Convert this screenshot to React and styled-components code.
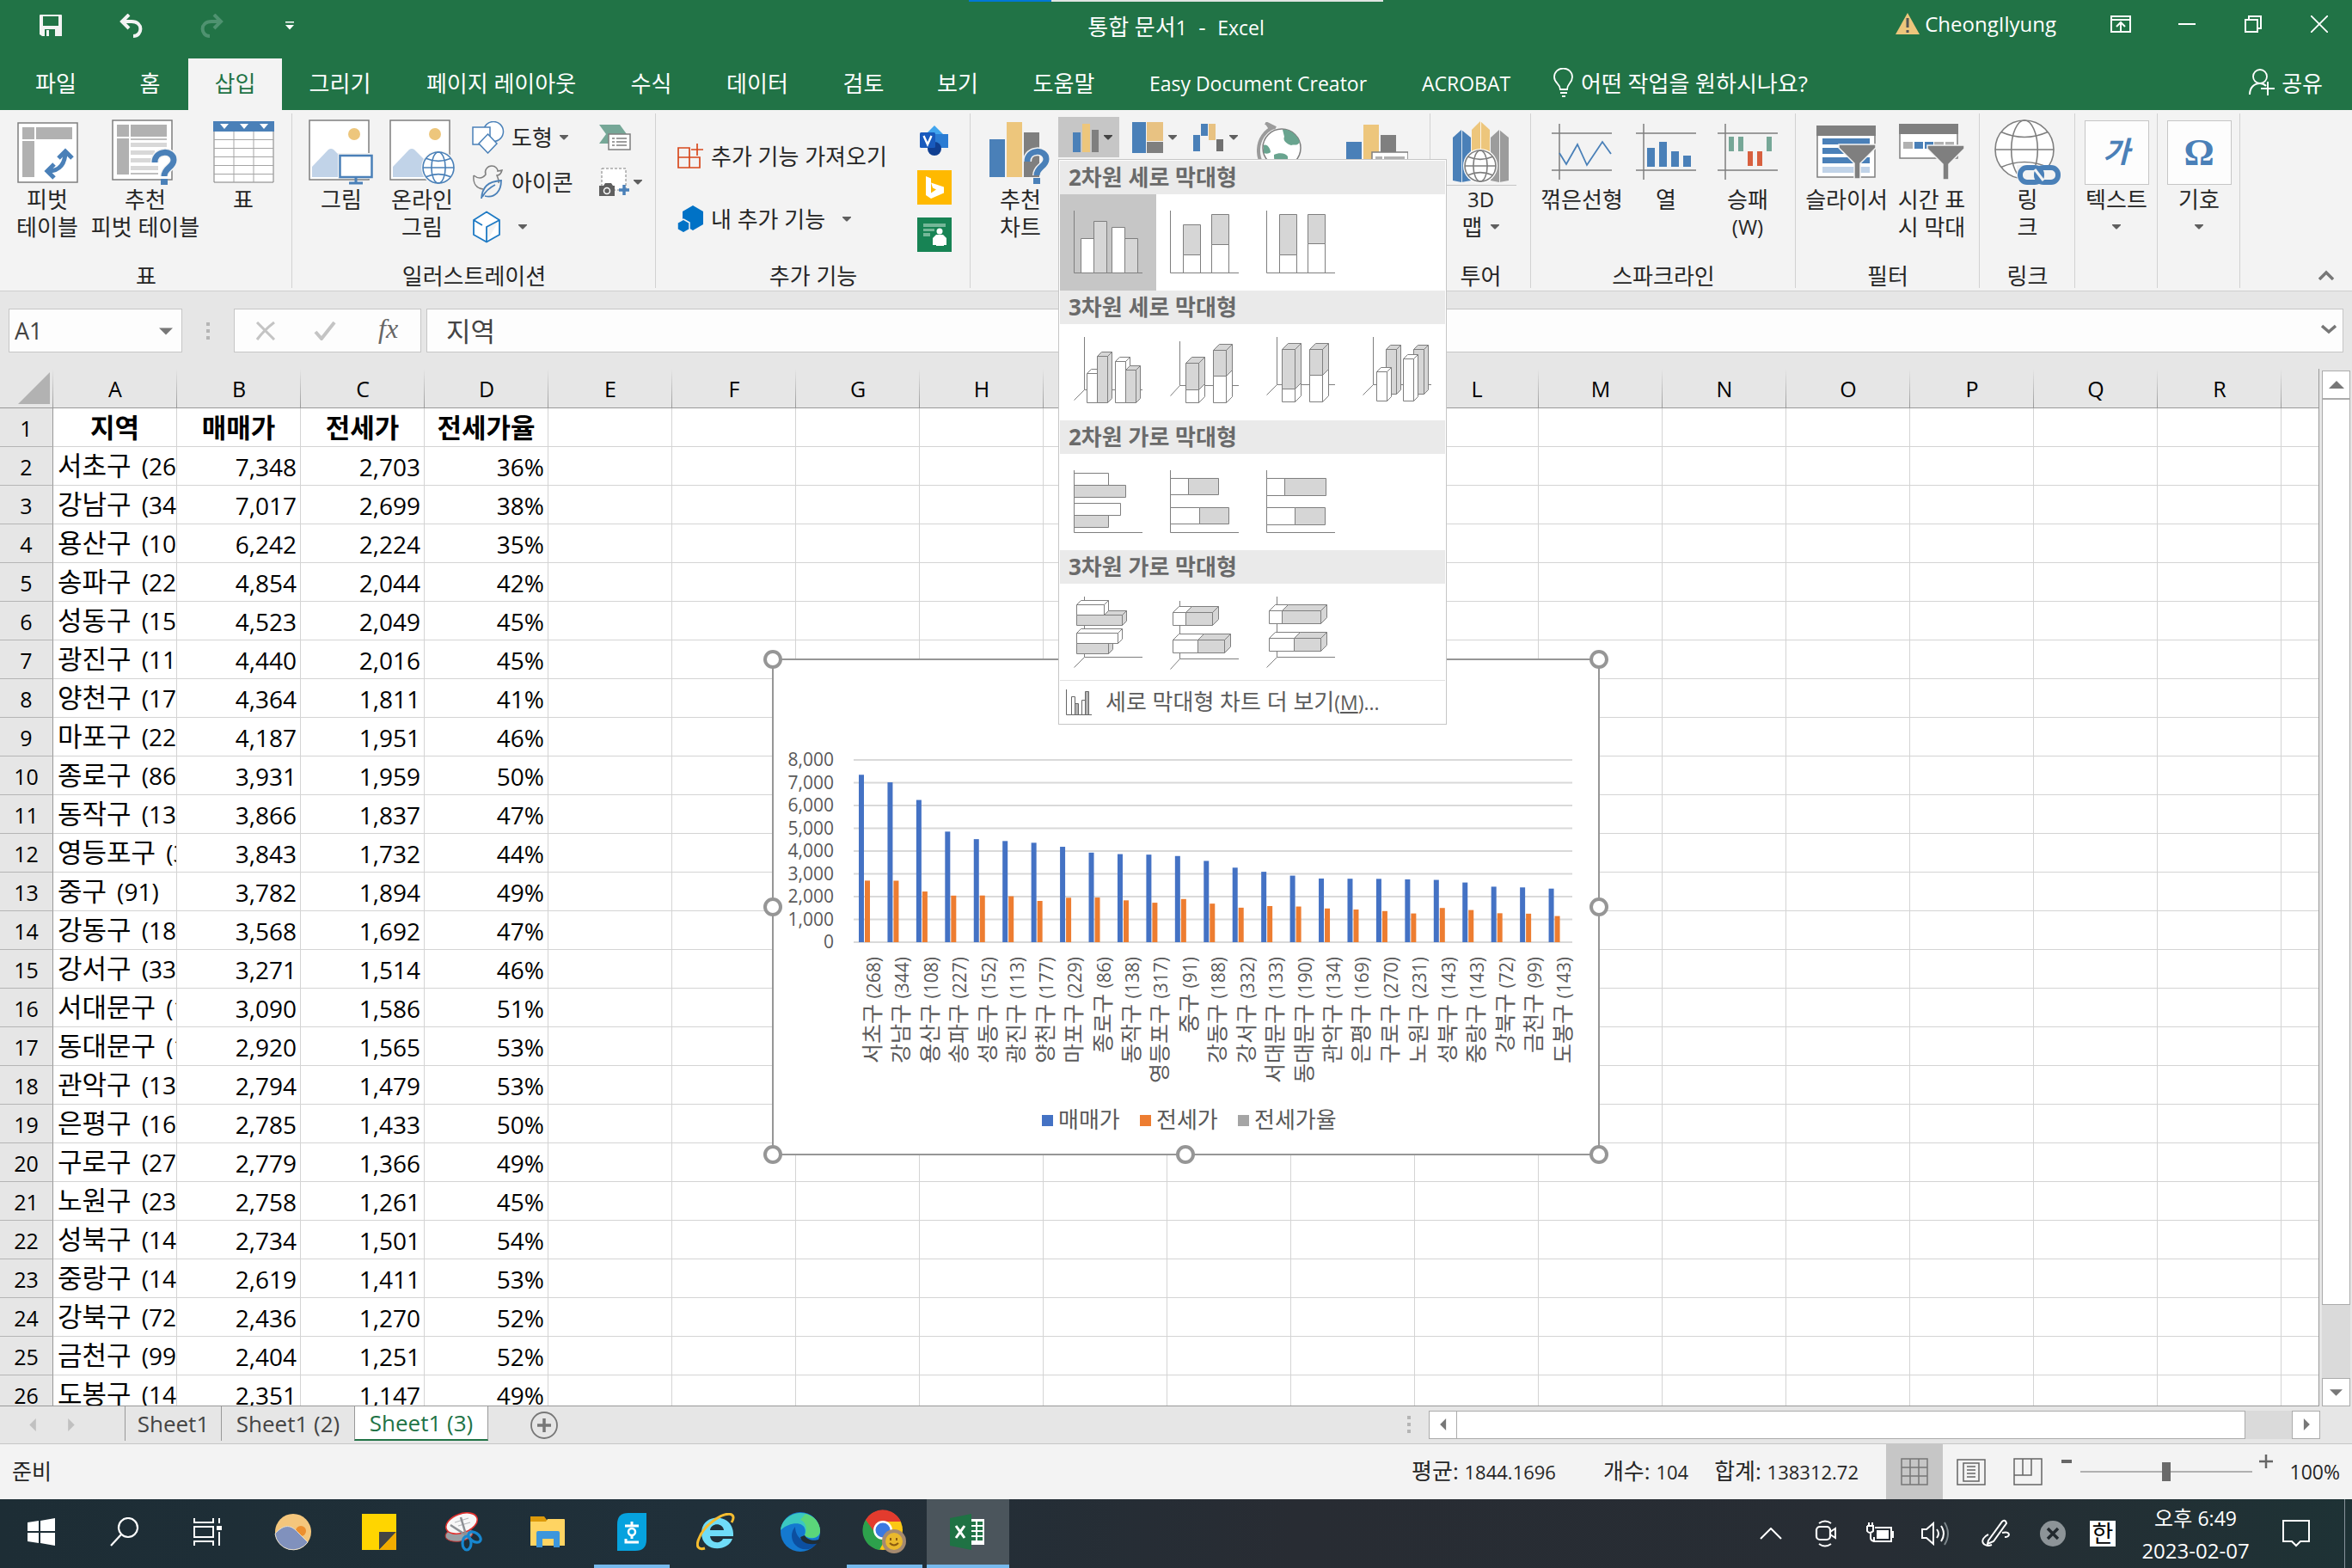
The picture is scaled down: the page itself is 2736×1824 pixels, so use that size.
import React from "react";
import styled, { createGlobalStyle } from "styled-components";

const Global = createGlobalStyle`
  *, *::before, *::after { box-sizing: border-box; }
  html, body { margin: 0; height: 100%; }
  body {
    font-family: "Open Sans", "Noto Sans CJK KR", sans-serif;
    font-size: 26px;
    color: #262626;
    overflow: hidden;
  }
  #root { height: 100%; }
  button, input { font: inherit; color: inherit; border: 0; background: none; padding: 0; margin: 0; border-radius: 0; }
  svg { display: block; flex: none; }
`;

const BLUE = "#4a80b8";
const GOLD = "#edc67c";
const GRAY = "#7f7f7f";

/* ---------- frame ---------- */
const Window = styled.div`
  display: flex;
  flex-direction: column;
  height: 100vh;
  background: #e6e6e6;
`;
const Latin = styled.span`
  font-size: ${(p) => p.$size}px;
  margin-left: ${(p) => p.$gap || 0}px;
`;

/* ---------- title bar ---------- */
const TitleBar = styled.header`
  position: relative;
  display: grid;
  grid-template-columns: 1fr auto 1fr;
  align-items: center;
  height: 68px;
  padding-bottom: 8px;
  background: #217346;
  color: #fff;
`;
const LoadingStrip = styled.div`
  position: absolute;
  top: 0;
  left: 50%;
  width: 482px;
  height: 2px;
  transform: translateX(-50%);
  background: linear-gradient(to right, #0078d7 20%, #e0e5e2 20%);
`;
const QuickAccess = styled.div`
  display: flex;
  align-items: center;
  padding-left: 26px;
`;
const QuickButton = styled.button`
  width: ${(p) => p.$w || 93}px;
  height: 48px;
  display: grid;
  place-items: center start;
  padding-left: 20px;
`;
const DocTitle = styled.h1`
  margin: 0;
  padding-top: 2px;
  font-size: 26px;
  line-height: 32px;
  font-weight: 400;
  white-space: pre;
`;
const Account = styled.div`
  display: flex;
  align-items: center;
  justify-content: flex-end;
  padding-bottom: 4px;
`;
const UserButton = styled.button`
  display: flex;
  align-items: center;
  gap: 6px;
  padding-right: 36px;
  font-size: 24px;
  line-height: 32px;
`;
const CaptionButton = styled.button`
  width: 77px;
  height: 48px;
  display: grid;
  place-items: center;
`;

/* ---------- ribbon tabs ---------- */
const TabBar = styled.nav`
  display: flex;
  height: 60px;
  background: #217346;
  color: #fff;
`;
const RibbonTab = styled.button`
  width: ${(p) => p.$w}px;
  font-size: ${(p) => (p.$latin ? 23 : 26)}px;
  line-height: 36px;
  padding-bottom: 2px;
  white-space: nowrap;
  background: ${(p) => (p.$active ? "#f3f3f3" : "transparent")};
  color: ${(p) => (p.$active ? "#217346" : "#fff")};
`;
const TellMe = styled.button`
  display: flex;
  align-items: center;
  gap: 8px;
  padding: 0 0 4px 17px;
`;
const Share = styled(TellMe)`
  margin-left: auto;
  padding-right: 34px;
`;

/* ---------- ribbon ---------- */
const Ribbon = styled.section`
  display: flex;
  height: 211px;
  background: #f3f3f3;
  border-bottom: 1px solid #cfcfcf;
  line-height: 32px;
`;
const Group = styled.div`
  display: flex;
  flex-direction: column;
  flex: none;
  width: ${(p) => p.$w}px;
  background: linear-gradient(#d2d2d2, #d2d2d2) right 4px / 1px 203px no-repeat;
`;
const GroupBody = styled.div`
  display: flex;
  height: 177px;
  padding: 0 ${(p) => p.$pad || 0}px;
`;
const GroupLabel = styled.div`
  text-align: center;
  height: 33px;
`;
const BigButton = styled.button`
  display: flex;
  flex-direction: column;
  align-items: center;
  flex: none;
  width: ${(p) => p.$w}px;
  padding-top: 10px;
  line-height: 32px;
  white-space: nowrap;
`;
const BigIcon = styled.span`
  display: grid;
  place-items: center;
  height: 78px;
`;
const BigLabel = styled.span`
  display: flex;
  flex-direction: column;
  align-items: center;
`;
const LabelLine = styled.span`
  display: flex;
  align-items: center;
  gap: 10px;
  height: 32px;
`;
const SmallColumn = styled.div`
  display: flex;
  flex-direction: column;
  padding-top: 6px;
  padding-left: ${(p) => p.$left || 0}px;
  width: ${(p) => p.$w}px;
`;
const SmallButton = styled.button`
  display: flex;
  align-items: center;
  gap: ${(p) => p.$gap || 8}px;
  height: ${(p) => p.$h || 52}px;
  white-space: nowrap;
`;
const AddinColumn = styled(SmallColumn)`
  padding-top: 17px;
  padding-left: 25px;
`;
const AddinStores = styled.div`
  display: flex;
  flex-direction: column;
  gap: 15px;
  padding-top: 15px;
`;
const StoreButton = styled.button`
  width: 40px;
  height: 40px;
`;
const GalleryRow = styled.div`
  display: flex;
  align-items: flex-start;
  padding-top: 8px;
`;
const MenuAnchor = styled.div`
  position: relative;
`;
const SplitButton = styled.button`
  display: flex;
  align-items: center;
  gap: 6px;
  width: 71px;
  height: 47px;
  padding-left: 15px;
  background: ${(p) => (p.$on ? "#c6c6c6" : "transparent")};
`;
const PlainIconButton = styled.button`
  padding: 6px 0 0 ${(p) => p.$left}px;
`;
const Tile = styled.span`
  display: grid;
  place-items: center;
  width: 75px;
  height: 75px;
  border: 1px solid #c6c6c6;
  background: #fdfdfd;
`;
const Collapse = styled.button`
  margin-left: auto;
  align-self: flex-end;
  width: 60px;
  height: 36px;
  display: grid;
  place-items: center;
`;
const MapSplit = styled(BigIcon)`
  width: 82px;
  border-bottom: 1px solid #c6c6c6;
`;

/* ---------- chart type menu ---------- */
const Menu = styled.div`
  position: absolute;
  z-index: 5;
  top: 49px;
  left: 0;
  width: 452px;
  padding: 1px;
  background: #fff;
  border: 1px solid #c6c6c6;
`;
const MenuHeading = styled.h2`
  margin: 0;
  padding-left: 10px;
  height: 39px;
  line-height: 38px;
  font-size: 26px;
  font-weight: 700;
  color: #6a6a6a;
  background: #eaeaea;
`;
const MenuGrid = styled.div`
  display: grid;
  grid-template-columns: repeat(4, 112px);
`;
const ChartTile = styled.button`
  width: 112px;
  height: 112px;
  background: ${(p) => (p.$on ? "#c6c6c6" : "transparent")};
`;
const MenuFooter = styled.button`
  display: flex;
  align-items: center;
  gap: 16px;
  width: 100%;
  height: 50px;
  padding-left: 7px;
  border-top: 1px solid #e1e1e1;
  color: #5c5c5c;
  white-space: nowrap;
`;

/* ---------- formula bar ---------- */
const FormulaBar = styled.div`
  display: flex;
  align-items: center;
  height: 90px;
  padding: 20px 10px 19px;
`;
const Box = styled.div`
  display: flex;
  align-items: center;
  height: 51px;
  background: #fdfdfd;
  border: 1px solid #c6c6c6;
`;
const NameBox = styled(Box)`
  width: 202px;
  justify-content: space-between;
  padding: 0 10px 0 6px;
`;
const NameInput = styled.input`
  width: 150px;
  font-size: 27px;
  color: #444;
  outline: 0;
`;
const FormulaTools = styled(Box)`
  width: 218px;
  margin-right: 6px;
  padding: 0 20px 0 24px;
  justify-content: space-between;
`;
const FormulaBox = styled(Box)`
  flex: 1;
  padding: 0 7px 3px 22px;
`;
const FormulaInput = styled.input`
  flex: 1;
  font-size: 31px;
  color: #444;
  outline: 0;
`;
const Grip = styled.span`
  width: ${(p) => p.$w}px;
  display: grid;
  place-items: center;
`;

/* ---------- sheet ---------- */
const Workspace = styled.main`
  position: relative;
  flex: 1;
  min-height: 0;
  display: flex;
`;
const SheetView = styled.div`
  position: relative;
  flex: 1;
  min-width: 0;
  overflow: hidden;
  border-right: 1px solid #999;
  border-bottom: 1px solid #999;
`;
const SheetTable = styled.table`
  table-layout: fixed;
  border-collapse: separate;
  border-spacing: 0;
  width: 2798px;
  background: #fff;
`;
const RowCol = styled.col`
  width: 62px;
`;
const ColHead = styled.th`
  height: 46px;
  padding: 0;
  font-size: 25px;
  line-height: 44px;
  font-weight: 400;
  color: #000;
  border-bottom: 1px solid #999;
  background: linear-gradient(#e6e6e6, #999) right / 1px 100% no-repeat, #e6e6e6;
`;
const Corner = styled(ColHead)`
  & svg { margin-left: 21px; }
`;
const RowHead = styled.th`
  height: 45px;
  padding: 2px 0 0;
  font-size: 25px;
  line-height: 40px;
  font-weight: 400;
  color: #000;
  background: #e6e6e6;
  border-right: 1px solid #999;
  border-bottom: 1px solid #b5b5b5;
`;
const Cell = styled.td`
  height: 45px;
  padding: ${(p) => (p.$align === "right" ? "2px 4px 0 0" : p.$align === "center" ? "0" : "0 0 0 5px")};
  font-size: ${(p) => (p.$align === "right" ? 28 : 31)}px;
  font-weight: ${(p) => (p.$align === "center" ? 700 : 400)};
  line-height: 41px;
  color: #000;
  text-align: ${(p) => p.$align || "left"};
  white-space: nowrap;
  overflow: hidden;
  border-right: 1px solid #d4d4d4;
  border-bottom: 1px solid #d4d4d4;
`;
const ChartObject = styled.svg`
  position: absolute;
  left: 887px;
  top: 326px;
`;
const VScroll = styled.div`
  display: flex;
  flex-direction: column;
  width: 38px;
  padding: 2px 3px 0 3px;
`;
const ScrollButton = styled.button`
  display: grid;
  place-items: center;
  flex: none;
  width: 33px;
  height: 33px;
  background: #fff;
  border: 1px solid #ababab;
`;
const VTrack = styled.div`
  flex: 1;
  width: 33px;
  background: #dadada;
`;
const VThumb = styled.div`
  height: calc(100% - 85px);
  background: #fff;
  border: 1px solid #ababab;
`;

/* ---------- sheet tabs ---------- */
const SheetBar = styled.div`
  display: flex;
  align-items: stretch;
  height: 44px;
  border-bottom: 1px solid #c6c6c6;
  color: #444;
`;
const SheetNav = styled.button`
  width: 44px;
  display: grid;
  place-items: center;
  &:first-child { margin-left: 16px; }
`;
const SheetTabs = styled.div`
  display: flex;
  align-items: flex-start;
  margin-left: 41px;
`;
const SheetTab = styled.button`
  width: ${(p) => p.$w}px;
  height: 40px;
  font-size: 26px;
  line-height: 36px;
  white-space: nowrap;
  border-left: 1px solid #999;
  color: ${(p) => (p.$on ? "#217346" : "#444")};
  background: ${(p) => (p.$on ? "#fff" : "transparent")};
  ${(p) => p.$on && "border-bottom: 2px solid #217346; border-right: 1px solid #999;"}
`;
const AddSheet = styled.button`
  width: 130px;
  display: grid;
  place-items: center;
`;
const HScroll = styled.div`
  display: flex;
  align-items: center;
  width: 1082px;
  margin-left: auto;
  margin-right: 37px;
  height: 42px;
`;
const HTrack = styled.div`
  flex: 1;
  height: 33px;
  background: #dadada;
`;
const HThumb = styled.div`
  width: calc(100% - 54px);
  height: 33px;
  background: #fff;
  border: 1px solid #ababab;
  border-left: 0;
`;

/* ---------- status bar ---------- */
const StatusBar = styled.footer`
  display: flex;
  align-items: center;
  height: 64px;
  padding: 0 14px;
  background: #f3f3f3;
  line-height: 32px;
`;
const Ready = styled.span`
  font-size: 25px;
  padding-bottom: 2px;
`;
const Stats = styled.div`
  display: flex;
  margin-left: auto;
  padding-right: 32px;
  padding-bottom: 2px;
`;
const Stat = styled.span`
  padding-left: ${(p) => p.$gap}px;
  white-space: nowrap;
`;
const ViewButton = styled.button`
  width: 66px;
  height: 64px;
  display: grid;
  place-items: center;
  background: ${(p) => (p.$on ? "#c6c6c6" : "transparent")};
`;
const ZoomStep = styled.button`
  align-self: flex-start;
  width: 24px;
  height: 40px;
  display: grid;
  place-items: center;
`;
const ZoomRange = styled.input`
  appearance: none;
  width: 200px;
  height: 24px;
  margin: 0 4px;
  background: linear-gradient(#b0b0b0, #b0b0b0) center / 100% 2px no-repeat;
  &::-webkit-slider-thumb {
    appearance: none;
    width: 10px;
    height: 22px;
    background: #6a6a6a;
  }
`;
const ZoomValue = styled.span`
  width: 74px;
  text-align: right;
  font-size: 23px;
`;

/* ---------- taskbar ---------- */
const Taskbar = styled.div`
  display: flex;
  height: 80px;
  background: linear-gradient(to right, #1d2d35, #20303a 30%, #282c33 55%, #272d34 80%, #1e3235);
  color: #fff;
`;
const Task = styled.button`
  display: grid;
  place-items: center;
  width: ${(p) => p.$w || 98}px;
  background: ${(p) => (p.$on ? "#4b555c" : "transparent")};
  border-bottom: 4px solid transparent;
  border-image: ${(p) =>
    p.$on
      ? "linear-gradient(#76b9ed, #76b9ed) 4"
      : p.$run
      ? "linear-gradient(to right, transparent 9px, #76b9ed 9px, #76b9ed 89px, transparent 89px) 4"
      : "none"};
`;
const Tray = styled.div`
  display: flex;
  margin-left: auto;
`;
const TrayButton = styled.button`
  width: ${(p) => p.$w || 64}px;
  display: grid;
  place-items: center;
`;
const ImeBadge = styled.span`
  display: grid;
  place-items: center;
  width: 30px;
  height: 30px;
  background: #fff;
  color: #000;
  font-size: 27px;
  line-height: 30px;
`;
const Clock = styled.button`
  width: 156px;
  font-size: 24px;
  line-height: 37px;
  text-align: center;
`;
const Notice = styled(TrayButton)`
  width: 96px;
  margin-right: 8px;
  padding-right: 18px;
  border-right: 1px solid #87939a;
`;

/* ---------- icons ---------- */
const Svg = ({ w, h, children, ...rest }) => (
  <svg width={w} height={h} viewBox={`0 0 ${w} ${h}`} fill="none" aria-hidden="true" {...rest}>
    {children}
  </svg>
);
const Caret = ({ color = "#5f5f5f" }) => (
  <Svg w={10} h={6}><path d="M0 0h10v1L5.500 5.500h-1L0 1z" fill={color} /></Svg>
);
const Tri = ({ dir = "up", color = "#777", s = 18 }) => {
  const d = { up: "M0 13L9 4l9 9z", down: "M0 5l9 9 9-9z", left: "M13 0L4 9l9 9z", right: "M5 0l9 9-9 9z" }[dir];
  return <svg width={s} height={s} viewBox="0 0 18 18" aria-hidden="true"><path d={d} fill={color} /></svg>;
};
const Question = ({ x, y }) => (
  <g transform={`translate(${x} ${y})`}>
    {[["#f3f3f3", 10], [BLUE, 7]].map(([c, w]) => (
      <path key={c} d="M4 15C4 0 26 0 26 12C26 21 15 21 15 31" stroke={c} strokeWidth={w} />
    ))}
    <path d="M11 34h8v7h-8z" fill={BLUE} />
  </g>
);
const PivotFrame = () => (
  <>
    <path d="M1 1h69v69H1z" fill="#fff" stroke={GRAY} strokeWidth="1.5" />
    <path d="M6 6h14v14H6zM22 6h42v14H22zM6 22h14v42H6z" fill="#b1b1b1" />
  </>
);
const PivotIcon = () => (
  <Svg w={71} h={71}>
    <PivotFrame />
    <path d="M56 34C56 48 50 57 36 57" stroke={BLUE} strokeWidth="5" />
    <path d="M48 42L56 34L64 42M43 49L35 57L43 65" stroke={BLUE} strokeWidth="5" />
  </Svg>
);
const PivotHelpIcon = () => (
  <Svg w={78} h={76}>
    <PivotFrame />
    <path d="M22 23h42M22 63h32" stroke={GRAY} />
    <path d="M22 27h42v5H22zM22 36h28v5H22zM22 45h24v5H22zM22 54h32v5H22z" fill="#d8d8d8" />
    <Question x={46} y={35} />
  </Svg>
);
const TableIcon = () => (
  <Svg w={71} h={72}>
    <path d="M1 1h69v70H1z" fill="#fff" stroke={GRAY} />
    <path d="M0 0h71v12H0z" fill={BLUE} />
    <path d="M8 3h10l-5 6zM31 3h10l-5 6zM54 3h10l-5 6z" fill="#fff" />
    <path d="M24 12v59M47 12v59M1 21.500h69M1 31.500h69M1 41.500h69M1 51.500h69M1 61.500h69" stroke="#a5a5a5" />
  </Svg>
);
const Photo = () => (
  <>
    <path d="M1 1h69v69H1z" fill="#fff" stroke={GRAY} strokeWidth="1.5" />
    <circle cx="53" cy="17" r="7" fill={GOLD} />
    <path d="M4 67V55L23 35q3-2 6 0L52 58v9z" fill="#c1d3e8" />
  </>
);
const Globe = ({ cx, cy, r, stroke = BLUE, fill = "#fff", sw = 1.6 }) => (
  <g stroke={stroke} strokeWidth={sw}>
    <circle cx={cx} cy={cy} r={r} fill={fill} />
    <ellipse cx={cx} cy={cy} rx={r * 0.45} ry={r} />
    <path d={`M${cx - r} ${cy}h${2 * r}M${cx - r * 0.8} ${cy - r * 0.6}q${r * 0.8} ${r * 0.35} ${r * 1.6} 0M${cx - r * 0.8} ${cy + r * 0.6}q${r * 0.8} ${-r * 0.35} ${r * 1.6} 0`} />
  </g>
);
const PictureIcon = () => (
  <Svg w={76} h={76}>
    <Photo />
    <path d="M34 39h42v30H34z" fill="#f3f3f3" />
    <path d="M36.500 42h37v25h-37z" fill="#fff" stroke={BLUE} strokeWidth="2.500" />
    <path d="M55 67v7M47 74h16" stroke={BLUE} strokeWidth="3" />
  </Svg>
);
const OnlinePictureIcon = () => (
  <Svg w={76} h={76}><Photo /><circle cx="57" cy="56" r="20" fill="#f3f3f3" /><Globe cx={57} cy={56} r={18} /></Svg>
);
const ShapesIcon = () => (
  <Svg w={38} h={38}>
    <circle cx="25" cy="12" r="11.500" fill="#fff" stroke={BLUE} strokeWidth="1.500" />
    <path d="M1 7h20v20H1z" fill="#fff" stroke={BLUE} strokeWidth="1.500" />
    <path d="M18.500 15L29 26 18.500 37 8 26z" fill="#fff" stroke={BLUE} strokeWidth="1.500" />
  </Svg>
);
const DuckIcon = () => (
  <Svg w={38} h={40}>
    <path d="M2 12c5 4 10 4 14-1c-2-5 2-10 7-10c5 0 7 4 7 6l5-1c-1 4-3 6-6 6c1 3 3 6 2 9M2 12c-1 9 3 15 11 16" stroke={GRAY} strokeWidth="1.500" />
    <path d="M11 39C12 26 18 19 34 18C34 30 27 39 15 36M12 37C16 30 21 26 27 23" stroke={BLUE} strokeWidth="1.800" />
  </Svg>
);
const CubeIcon = () => (
  <Svg w={34} h={38}>
    <path d="M17 1.500L32 11v17L17 36.500 2 28V11zM2 11l10 6M32 11l-15 8v17" fill="#fff" stroke="#1e7ac4" strokeWidth="1.800" />
  </Svg>
);
const SmartArtIcon = () => (
  <Svg w={37} h={30}>
    <path d="M0 0h24l8 11-8 11H0l8-11z" fill="#76a797" />
    <path d="M11 11h25v18H11z" fill="#fff" stroke={GRAY} strokeWidth="1.500" />
    <path d="M15 16h3M15 20h3M15 24h3M20 16h12M20 20h12M20 24h12" stroke={GRAY} strokeWidth="1.500" />
  </Svg>
);
const ScreenshotIcon = () => (
  <Svg w={36} h={34}>
    <path d="M3 1h28v25H3z" fill="#fff" stroke={GRAY} strokeDasharray="3 2" />
    <path d="M0 21h5l2-3h7l2 3h2v12H0z" fill="#5f5f5f" />
    <circle cx="9" cy="27" r="3.500" stroke="#fff" strokeWidth="1.500" />
    <path d="M29 20v12M23 26h12" stroke={BLUE} strokeWidth="3.500" />
  </Svg>
);
const GetAddinIcon = () => (
  <Svg w={31} h={31}><path d="M1 6h13v23H1zM1 17h25v12H1M23 1v14M16 8h14" stroke="#d8481c" strokeWidth="1.700" /></Svg>
);
const MyAddinIcon = () => (
  <Svg w={31} h={32}>
    <path d="M18 0l12 7v15l-12 7-12-7V7z" fill="#0072c6" />
    <path d="M7 16l7 4v8l-7 4-7-4v-8z" fill="#0072c6" stroke="#f3f3f3" strokeWidth="1.500" />
  </Svg>
);
const VisioIcon = () => (
  <Svg w={40} h={40}>
    <path d="M20 3l10 10-10 10L10 13z" fill="#41a5ee" />
    <path d="M18 13h18v16H18z" fill="#2b7cd3" />
    <circle cx="20" cy="30" r="8" fill="#103f91" />
    <rect x="3" y="11" width="18" height="18" rx="1.500" fill="#185abd" />
    <path d="M7.500 15l4.500 10 4.500-10" stroke="#fff" strokeWidth="2.400" />
  </Svg>
);
const BingIcon = () => (
  <Svg w={40} h={40}><path d="M0 0h40v40H0z" fill="#ffb900" /><path d="M10 7l6 2.500v17l6-4-4-2-2-6 15 5v7L16 33l-6-4z" fill="#fff" /></Svg>
);
const PeopleIcon = () => (
  <Svg w={40} h={40}>
    <path d="M0 0h40v40H0z" fill="#178354" />
    <path d="M7 7h26v4H7zM7 13h13v3H7zM7 18h8v4H7z" fill="#74b798" />
    <circle cx="26" cy="16" r="3.500" fill="#fff" />
    <path d="M22 20h8l4 4v8h-3v1h-9v-1h-4v-8z" fill="#fff" />
  </Svg>
);
const RecommendedChartIcon = () => (
  <Svg w={72} h={76}>
    <path d="M0 23h18v44H0z" fill={BLUE} /><path d="M20 3h18v64H20z" fill={GOLD} /><path d="M40 15h18v52H40z" fill={GRAY} />
    <Question x={40} y={34} />
  </Svg>
);
const ColumnIcon = () => (
  <Svg w={32} h={34}><path d="M2 11h9v23H2z" fill={BLUE} /><path d="M13 1h9v33h-9z" fill={GOLD} /><path d="M24 8h8v26h-8z" fill={GRAY} /></Svg>
);
const TreemapIcon = () => (
  <Svg w={36} h={36}><path d="M0 0h16v36H0z" fill={BLUE} /><path d="M17 0h19v22H17z" fill="#e8c282" /><path d="M17 23h19v13H17z" fill={GRAY} /></Svg>
);
const WaterfallIcon = () => (
  <Svg w={36} h={34}><path d="M0 14h8v19H0zM9 1h8v14H9z" fill={BLUE} /><path d="M18 1h8v19h-8z" fill="#e8c282" /><path d="M27 19h8v14h-8z" fill="#707070" /></Svg>
);
const MapsIcon = () => (
  <Svg w={54} h={64}>
    <path d="M20 6C-2 14-6 48 20 62M10 1l12 6M16 8l-4-6" stroke="#9b9b9b" strokeWidth="4" />
    <circle cx="29" cy="30" r="22" fill="#fff" stroke={GRAY} strokeWidth="1.500" />
    <path d="M30 9c8-2 17 6 20 14c-3 6-8 2-10 4c-6-2-10-6-8-10zM8 27c4-2 8 4 8 8c-2 2-5 2-8 1zM20 38c6-3 14-2 16 2v10H24c-4-4-4-8-4-12z" fill="#69a48f" />
  </Svg>
);
const PivotChartIcon = () => (
  <Svg w={72} h={70}>
    <path d="M0 23h18v44H0z" fill={BLUE} /><path d="M20 3h18v64H20z" fill={GOLD} /><path d="M40 15h18v52H40z" fill={GRAY} />
    <path d="M30 35h42v34H30z" fill="#fff" stroke={GRAY} strokeWidth="1.500" /><path d="M34 40h8v8h-8zM44 40h24v8H44z" fill="#b1b1b1" />
  </Svg>
);
const Map3dIcon = () => (
  <Svg w={66} h={72}>
    <path d="M0 19l10-9 11 9v50l-11 2-10-2z" fill={BLUE} />
    <path d="M22 10L32 0l11 10v50H22z" fill={GOLD} />
    <path d="M44 19l10-9 11 9v50l-11 2-10-2z" fill="#9c9c9c" />
    <path d="M10.500 10v61M32.500 0v40M54.500 10v61" stroke="#fff" strokeOpacity=".8" />
    <circle cx="32" cy="52" r="20" fill="#fff" /><Globe cx={32} cy={52} r={18} stroke={GRAY} />
  </Svg>
);
const SparkFrame = () => <path d="M0 11h70M0 54h70M9 0v65" stroke={GRAY} strokeWidth="1.500" />;
const SparkLineIcon = () => (
  <Svg w={70} h={66}><SparkFrame /><path d="M9 34l8 13 13-23 11 24 18-27 10 14" stroke={BLUE} strokeWidth="1.800" /></Svg>
);
const SparkColIcon = () => (
  <Svg w={70} h={66}><SparkFrame /><path d="M13 28h9v22h-9zM27 21h9v29h-9zM41 32h9v18h-9zM55 37h9v13h-9z" fill={BLUE} /></Svg>
);
const SparkWinIcon = () => (
  <Svg w={70} h={66}><SparkFrame /><path d="M13 15h6v17h-6zM24 15h6v17h-6zM57 15h6v17h-6z" fill="#76a797" /><path d="M35 32h6v17h-6zM46 32h6v17h-6z" fill="#d8603f" /></Svg>
);
const Funnel = ({ x, y }) => (
  <path transform={`translate(${x} ${y})`} d="M0 0h43v4L25 22v18h-7V22L0 4z" fill={GRAY} stroke="#f3f3f3" strokeWidth="1.500" />
);
const SlicerIcon = () => (
  <Svg w={70} h={62}>
    <path d="M1 1h67v59H1z" fill="#fff" stroke={GRAY} strokeWidth="1.500" /><path d="M0 0h69v12H0z" fill={GRAY} />
    <path d="M7 15h55v7H7zM7 26h55v7H7zM7 37h55v7H7z" fill={BLUE} /><path d="M7 48h55v7H7z" fill="#c1d3e8" />
    <Funnel x={26} y={22} />
  </Svg>
);
const TimelineIcon = () => (
  <Svg w={76} h={67}>
    <path d="M1 1h67v39H1z" fill="#fff" stroke={GRAY} strokeWidth="1.500" /><path d="M0 0h69v12H0z" fill={GRAY} />
    <path d="M5 21h11v8H5zM41 21h11v8H41zM54 21h10v8H54z" fill="#b1b1b1" /><path d="M18 21h10v8H18zM30 21h10v8H30z" fill={BLUE} />
    <Funnel x={33} y={25} />
  </Svg>
);
const LinkIcon = () => (
  <Svg w={78} h={78}>
    <Globe cx={35} cy={36} r={34} stroke={GRAY} />
    <path d="M26 54h52v24H34q-8-4-8-12z" fill="#f3f3f3" />
    <rect x="30" y="57" width="25" height="17" rx="8" stroke={BLUE} strokeWidth="6" />
    <rect x="49" y="57" width="25" height="17" rx="8" stroke={BLUE} strokeWidth="6" />
    <path d="M47 59l10 13" stroke="#f3f3f3" strokeWidth="3" />
  </Svg>
);
const GlyphIcon = ({ text, serif }) => (
  <Svg w={50} h={50}>
    <text x="25" y={serif ? 40 : 37} textAnchor="middle" fill={BLUE} fontSize={serif ? 44 : 34} fontWeight="700" fontStyle={serif ? "normal" : "italic"}
      fontFamily={serif ? '"Liberation Serif", serif' : '"Noto Sans CJK KR", sans-serif'}>{text}</text>
  </Svg>
);

/* ---------- chart type thumbnails ---------- */
const F = { w: "#fff", g: "#d6d6d6" };
const Prism = ({ b: [x0, y0, x1, y1, c, d] }) => (
  <g fill={F[c]} stroke={GRAY} strokeLinejoin="round">
    {d > 0 && <path d={`M${x0} ${y0}l${d} ${-d}H${x1 + d}V${y1 - d}L${x1} ${y1}V${y0}zM${x1} ${y0}l${d} ${-d}`} />}
    <path d={`M${x0} ${y0}H${x1}V${y1}H${x0}z`} />
  </g>
);
const flat = "M16.500 19V91.500H96";
const deep = (x, y0, y) => `M${x} ${y0}V${y}H96M${x} ${y}L16.500 ${y + 12}`;
const CHART_TYPES = [
  {
    title: "2차원 세로 막대형",
    tiles: [
      { name: "묶은 세로 막대형", axis: flat, bars: [[24.5, 51.5, 39.5, 91.5, "w", 0], [39.5, 31.5, 54.5, 91.5, "g", 0], [60.5, 38.5, 75.5, 91.5, "w", 0], [75.5, 51.5, 90.5, 91.5, "g", 0]] },
      { name: "누적 세로 막대형", axis: flat, bars: [[31.5, 35.5, 51.5, 70.5, "g", 0], [31.5, 70.5, 51.5, 91.5, "w", 0], [64.5, 23.5, 84.5, 58.5, "g", 0], [64.5, 58.5, 84.5, 91.5, "w", 0]] },
      { name: "100% 기준 누적 세로 막대형", axis: flat, bars: [[31.5, 23.5, 51.5, 70.5, "g", 0], [31.5, 70.5, 51.5, 91.5, "w", 0], [64.5, 23.5, 84.5, 57.5, "g", 0], [64.5, 57.5, 84.5, 91.5, "w", 0]] },
    ],
  },
  {
    title: "3차원 세로 막대형",
    tiles: [
      { name: "3차원 묶은 세로 막대형", axis: deep(28.5, 15, 76.5), bars: [[31.5, 57.5, 43.5, 91.5, "w", 5], [43.5, 37.5, 55.5, 91.5, "g", 5], [64.5, 43.5, 76.5, 91.5, "w", 5], [76.5, 53.5, 88.5, 91.5, "g", 5]] },
      { name: "3차원 누적 세로 막대형", axis: deep(27.5, 20, 71.5), bars: [[34.5, 76.5, 49.5, 91.5, "w", 7], [34.5, 45.5, 49.5, 76.5, "g", 7], [66.5, 60.5, 81.5, 91.5, "w", 7], [66.5, 30.5, 81.5, 60.5, "g", 7]] },
      { name: "3차원 100% 기준 누적 세로 막대형", axis: deep(28.5, 15, 70.5), bars: [[34.5, 75.5, 49.5, 90.5, "w", 7], [34.5, 29.5, 49.5, 75.5, "g", 7], [66.5, 59.5, 81.5, 90.5, "w", 7], [66.5, 29.5, 81.5, 59.5, "g", 7]] },
      { name: "3차원 세로 막대형", axis: deep(28.5, 15, 70.5), bars: [[43.5, 29.5, 55.5, 81.5, "g", 5], [75.5, 29.5, 87.5, 81.5, "g", 5], [32.5, 55.5, 44.5, 89.5, "w", 5], [63.5, 40.5, 75.5, 89.5, "w", 5]] },
    ],
  },
  {
    title: "2차원 가로 막대형",
    tiles: [
      { name: "묶은 가로 막대형", axis: flat, bars: [[16.5, 22.5, 56.5, 36.5, "w", 0], [16.5, 36.5, 76.5, 50.5, "g", 0], [16.5, 57.5, 70.5, 71.5, "w", 0], [16.5, 71.5, 56.5, 85.5, "g", 0]] },
      { name: "누적 가로 막대형", axis: flat, bars: [[16.5, 28.5, 37.5, 47.5, "w", 0], [37.5, 28.5, 72.5, 47.5, "g", 0], [16.5, 62.5, 50.5, 81.5, "w", 0], [50.5, 62.5, 84.5, 81.5, "g", 0]] },
      { name: "100% 기준 누적 가로 막대형", axis: flat, bars: [[16.5, 28.5, 37.5, 48.5, "w", 0], [37.5, 28.5, 85.5, 48.5, "g", 0], [16.5, 62.5, 49.5, 82.5, "w", 0], [49.5, 62.5, 84.5, 82.5, "g", 0]] },
    ],
  },
  {
    title: "3차원 가로 막대형",
    tiles: [
      { name: "3차원 묶은 가로 막대형", axis: deep(28.5, 15, 85.5), bars: [[19.5, 69.5, 56.5, 81.5, "g", 5], [19.5, 57.5, 67.5, 69.5, "w", 5], [19.5, 36.5, 72.5, 48.5, "g", 5], [19.5, 24.5, 51.5, 36.5, "w", 5]] },
      { name: "3차원 누적 가로 막대형", axis: deep(27.5, 20, 87.5), bars: [[19.5, 33.5, 34.5, 48.5, "w", 7], [34.5, 33.5, 65.5, 48.5, "g", 7], [19.5, 65.5, 48.5, 80.5, "w", 7], [48.5, 65.5, 79.5, 80.5, "g", 7]] },
      { name: "3차원 100% 기준 누적 가로 막대형", axis: deep(28.5, 15, 85.5), bars: [[19.5, 31.5, 34.5, 46.5, "w", 7], [34.5, 31.5, 79.5, 46.5, "g", 7], [19.5, 63.5, 48.5, 78.5, "w", 7], [48.5, 63.5, 79.5, 78.5, "g", 7]] },
    ],
  },
];

const ChartMenu = () => (
  <Menu>
    {CHART_TYPES.map((sec, s) => (
      <section key={sec.title}>
        <MenuHeading>{sec.title}</MenuHeading>
        <MenuGrid>
          {sec.tiles.map((t, i) => (
            <ChartTile key={t.name} $on={s === 0 && i === 0} aria-label={t.name}>
              <Svg w={112} h={112}>
                <path d={t.axis} stroke={GRAY} />
                {t.bars.map((b, k) => <Prism key={k} b={b} />)}
              </Svg>
            </ChartTile>
          ))}
        </MenuGrid>
      </section>
    ))}
    <MenuFooter>
      <Svg w={30} h={30}>
        <path d="M.5 0v29.500H30" stroke="#666" />
        <path d="M6.500 8.500h4v21h-4zM18.500 12.500h4v17h-4z" fill="#fff" stroke="#666" />
        <path d="M10.500 16.500h4v13h-4zM22.500 2.500h4v27h-4z" fill="#b1b1b1" stroke="#666" />
      </Svg>
      <span>세로 막대형 차트 더 보기<Latin $size={23}>(<u>M</u>)...</Latin></span>
    </MenuFooter>
  </Menu>
);

/* ---------- data ---------- */
const ROWS = [
  ["서초구", 268, 7348, 2703, 36], ["강남구", 344, 7017, 2699, 38], ["용산구", 108, 6242, 2224, 35],
  ["송파구", 227, 4854, 2044, 42], ["성동구", 152, 4523, 2049, 45], ["광진구", 113, 4440, 2016, 45],
  ["양천구", 177, 4364, 1811, 41], ["마포구", 229, 4187, 1951, 46], ["종로구", 86, 3931, 1959, 50],
  ["동작구", 138, 3866, 1837, 47], ["영등포구", 317, 3843, 1732, 44], ["중구", 91, 3782, 1894, 49],
  ["강동구", 188, 3568, 1692, 47], ["강서구", 332, 3271, 1514, 46], ["서대문구", 133, 3090, 1586, 51],
  ["동대문구", 190, 2920, 1565, 53], ["관악구", 134, 2794, 1479, 53], ["은평구", 169, 2785, 1433, 50],
  ["구로구", 270, 2779, 1366, 49], ["노원구", 231, 2758, 1261, 45], ["성북구", 143, 2734, 1501, 54],
  ["중랑구", 143, 2619, 1411, 53], ["강북구", 72, 2436, 1270, 52], ["금천구", 99, 2404, 1251, 52],
  ["도봉구", 143, 2351, 1147, 49],
];
const fmt = (n) => n.toLocaleString("en-US");
const COLS = "ABCDEFGHIJKLMNOPQRS".split("");

const Chart = () => {
  const x0 = 106, x1 = 942, base = 341, unit = 26.5 / 1000, step = (x1 - x0) / 25;
  const handles = [[12, 12], [973, 12], [12, 300], [973, 300], [12, 588], [492, 588], [973, 588]];
  return (
    <ChartObject width="986" height="600" viewBox="0 0 986 600" role="img" aria-label="매매가, 전세가, 전세가율">
      <rect x="12" y="12" width="961" height="576" fill="#fff" stroke="#969696" strokeWidth="2" />
      {[0, 1, 2, 3, 4, 5, 6, 7, 8].map((k) => (
        <g key={k}>
          <path d={`M${x0} ${base - k * 26.5}H${x1}`} stroke="#d9d9d9" strokeWidth="2" />
          <text x="83" y={base - k * 26.5 + 7} textAnchor="end" fontSize="21" fill="#595959">{fmt(k * 1000)}</text>
        </g>
      ))}
      {ROWS.map(([name, n, a, b], i) => {
        const x = x0 + i * step;
        return (
          <g key={name}>
            <rect x={x + 6} y={base - a * unit} width="6" height={a * unit} fill="#4472c4" />
            <rect x={x + 13} y={base - b * unit} width="6" height={b * unit} fill="#ed7d31" />
            <text transform={`translate(${x + 31} 358) rotate(-90)`} textAnchor="end" fontSize="25" fill="#595959">
              {name} <tspan fontSize="21">({n})</tspan>
            </text>
          </g>
        );
      })}
      {[["매매가", "#4472c4", 325], ["전세가", "#ed7d31", 439], ["전세가율", "#a5a5a5", 553]].map(([t, c, x]) => (
        <g key={t}>
          <rect x={x} y="542" width="13" height="13" fill={c} />
          <text x={x + 19} y="557" fontSize="26" fill="#595959">{t}</text>
        </g>
      ))}
      {handles.map(([x, y]) => <circle key={`${x}-${y}`} cx={x} cy={y} r="9" fill="#fff" stroke="#969696" strokeWidth="4" />)}
    </ChartObject>
  );
};

const Sheet = () => (
  <SheetView>
    <SheetTable>
      <colgroup><RowCol />{COLS.map((c) => <col key={c} />)}</colgroup>
      <thead>
        <tr>
          <Corner aria-label="모두 선택"><Svg w={37} h={37}><path d="M37 0v37H0z" fill="#b2b2b2" /></Svg></Corner>
          {COLS.map((c) => <ColHead key={c} scope="col">{c}</ColHead>)}
        </tr>
      </thead>
      <tbody>
        <tr>
          <RowHead scope="row">1</RowHead>
          {["지역", "매매가", "전세가", "전세가율"].map((t) => <Cell key={t} $align="center">{t}</Cell>)}
          {COLS.slice(4).map((c) => <Cell key={c} />)}
        </tr>
        {ROWS.map(([name, n, a, b, r], i) => (
          <tr key={name}>
            <RowHead scope="row">{i + 2}</RowHead>
            <Cell>{name} <Latin $size={28} $gap={4}>({n})</Latin></Cell>
            <Cell $align="right">{fmt(a)}</Cell>
            <Cell $align="right">{fmt(b)}</Cell>
            <Cell $align="right">{r}%</Cell>
            {COLS.slice(4).map((c) => <Cell key={c} />)}
          </tr>
        ))}
      </tbody>
    </SheetTable>
    <Chart />
  </SheetView>
);

/* ---------- sections ---------- */
const TABS = [
  ["파일", 130], ["홈", 89], ["삽입", 109], ["그리기", 135], ["페이지 레이아웃", 240], ["수식", 109], ["데이터", 138],
  ["검토", 109], ["보기", 110], ["도움말", 137], ["Easy Document Creator", 315, true], ["ACROBAT", 169, true],
];

const Big = ({ w, icon, lines, arrow }) => (
  <BigButton $w={w}>
    <BigIcon>{icon}</BigIcon>
    <BigLabel>
      {lines.map((l, i) => <LabelLine key={i}>{l}{arrow && i === lines.length - 1 && <Caret />}</LabelLine>)}
    </BigLabel>
  </BigButton>
);

const Header = () => (
  <>
    <TitleBar>
      <LoadingStrip />
      <QuickAccess>
        <QuickButton aria-label="저장">
          <Svg w={26} h={26}><path d="M0 1q0-1 1-1h24q1 0 1 1v24H3l-3-2z" fill="#f3f3f3" /><path d="M4 2h18v11H4zM6 17h12v8H6z" fill="#217346" /><path d="M8 18h3v7H8z" fill="#f3f3f3" /></Svg>
        </QuickButton>
        <QuickButton aria-label="실행 취소">
          <Svg w={28} h={28}><path d="M11 1L3 9l8 8M3 9h11c14 0 13 17 2 17" stroke="#f3f3f3" strokeWidth="4" /></Svg>
        </QuickButton>
        <QuickButton aria-label="다시 실행">
          <Svg w={28} h={28}><path d="M17 1l8 8-8 8M25 9H14C0 9 1 26 12 26" stroke="#4f9270" strokeWidth="4" /></Svg>
        </QuickButton>
        <QuickButton aria-label="빠른 실행 도구 모음 사용자 지정">
          <Svg w={24} h={10}><path d="M7 0h10v1.500H7zM7 4h10L12 9.500z" fill="#fff" /></Svg>
        </QuickButton>
      </QuickAccess>
      <DocTitle>통합 문서<Latin $size={23}>1</Latin>{"  -  "}<Latin $size={23}>Excel</Latin></DocTitle>
      <Account>
        <UserButton>
          <Svg w={28} h={26}><path d="M14 0L28 25H0z" fill="#edc67c" /><path d="M14 6v11M14 20v3" stroke="#555" strokeWidth="3" /></Svg>
          CheongIlyung
        </UserButton>
        <CaptionButton aria-label="리본 메뉴 표시 옵션"><Svg w={24} h={20}><path d="M1 1h22v18H1zM1 5h22M12 18V9M7 13l5-5 5 5" stroke="#fff" strokeWidth="2" /></Svg></CaptionButton>
        <CaptionButton aria-label="최소화"><Svg w={20} h={2}><path d="M0 0h20v2H0z" fill="#fff" /></Svg></CaptionButton>
        <CaptionButton aria-label="이전 크기로 복원"><Svg w={20} h={20}><path d="M1 5h14v14H1zM5 5V1h14v14h-4" stroke="#fff" strokeWidth="2" /></Svg></CaptionButton>
        <CaptionButton aria-label="닫기"><Svg w={20} h={20}><path d="M0 0l20 20M20 0L0 20" stroke="#fff" strokeWidth="1.800" /></Svg></CaptionButton>
      </Account>
    </TitleBar>
    <TabBar>
      {TABS.map(([t, w, latin]) => <RibbonTab key={t} $w={w} $latin={latin} $active={t === "삽입"}>{t}</RibbonTab>)}
      <TellMe>
        <Svg w={24} h={34}><path d="M8 25C8 18 1 18 1 10.500a10.500 10 0 0 1 21 0C22 18 16 18 16 25zM8 29h8M10 33h4" stroke="#fff" strokeWidth="1.800" /></Svg>
        어떤 작업을 원하시나요?
      </TellMe>
      <Share>
        <Svg w={30} h={32}><circle cx="13" cy="9" r="8" stroke="#fff" strokeWidth="1.800" /><path d="M1 30C1 22 6 17 13 17c3 0 5 1 7 3M22 15v16M14 23h16" stroke="#fff" strokeWidth="2" /></Svg>
        공유
      </Share>
    </TabBar>
  </>
);

const InsertRibbon = () => (
  <Ribbon>
    <Group $w={340}>
      <GroupBody>
        <Big w={110} icon={<PivotIcon />} lines={["피벗", "테이블"]} />
        <Big w={118} icon={<PivotHelpIcon />} lines={["추천", "피벗 테이블"]} />
        <Big w={110} icon={<TableIcon />} lines={["표"]} />
      </GroupBody>
      <GroupLabel>표</GroupLabel>
    </Group>
    <Group $w={423}>
      <GroupBody $pad={10}>
        <Big w={94} icon={<PictureIcon />} lines={["그림"]} />
        <Big w={94} icon={<OnlinePictureIcon />} lines={["온라인", "그림"]} />
        <SmallColumn $w={159} $left={11}>
          <SmallButton><ShapesIcon />도형<Caret /></SmallButton>
          <SmallButton><DuckIcon />아이콘</SmallButton>
          <SmallButton $gap={20} aria-label="3D 모델"><CubeIcon /><Caret /></SmallButton>
        </SmallColumn>
        <SmallColumn $w={56}>
          <SmallButton aria-label="SmartArt"><SmartArtIcon /></SmallButton>
          <SmallButton $gap={4} aria-label="스크린샷"><ScreenshotIcon /><Caret /></SmallButton>
        </SmallColumn>
      </GroupBody>
      <GroupLabel>일러스트레이션</GroupLabel>
    </Group>
    <Group $w={366}>
      <GroupBody>
        <AddinColumn $w={304}>
          <SmallButton $h={73}><GetAddinIcon />추가 기능 가져오기</SmallButton>
          <SmallButton $h={73}><MyAddinIcon /><LabelLine>내 추가 기능<span /><Caret /></LabelLine></SmallButton>
        </AddinColumn>
        <AddinStores>
          <StoreButton aria-label="Visio"><VisioIcon /></StoreButton>
          <StoreButton aria-label="Bing"><BingIcon /></StoreButton>
          <StoreButton aria-label="People Graph"><PeopleIcon /></StoreButton>
        </AddinStores>
      </GroupBody>
      <GroupLabel>추가 기능</GroupLabel>
    </Group>
    <Group $w={535}>
      <GroupBody $pad={14}>
        <Big w={88} icon={<RecommendedChartIcon />} lines={["추천", "차트"]} />
        <GalleryRow>
          <MenuAnchor>
            <SplitButton $on aria-label="세로 또는 가로 막대형 차트 삽입" aria-expanded="true"><ColumnIcon /><Caret color="#444" /></SplitButton>
            <ChartMenu />
          </MenuAnchor>
          <SplitButton aria-label="계층 구조 차트 삽입"><TreemapIcon /><Caret /></SplitButton>
          <SplitButton aria-label="폭포 차트 삽입"><WaterfallIcon /><Caret /></SplitButton>
          <PlainIconButton $left={18} aria-label="지도"><MapsIcon /></PlainIconButton>
          <PlainIconButton $left={50} aria-label="피벗 차트"><PivotChartIcon /></PlainIconButton>
        </GalleryRow>
      </GroupBody>
      <GroupLabel>차트</GroupLabel>
    </Group>
    <Group $w={117}>
      <GroupBody>
        <BigButton $w={117}>
          <MapSplit><Map3dIcon /></MapSplit>
          <BigLabel><LabelLine><Latin $size={24}>3D</Latin></LabelLine><LabelLine>맵<Caret /></LabelLine></BigLabel>
        </BigButton>
      </GroupBody>
      <GroupLabel>투어</GroupLabel>
    </Group>
    <Group $w={308}>
      <GroupBody $pad={10}>
        <Big w={98} icon={<SparkLineIcon />} lines={["꺾은선형"]} />
        <Big w={98} icon={<SparkColIcon />} lines={["열"]} />
        <Big w={92} icon={<SparkWinIcon />} lines={["승패", <Latin key="w" $size={24}>(W)</Latin>]} />
      </GroupBody>
      <GroupLabel>스파크라인</GroupLabel>
    </Group>
    <Group $w={214}>
      <GroupBody $pad={9}>
        <Big w={100} icon={<SlicerIcon />} lines={["슬라이서"]} />
        <Big w={98} icon={<TimelineIcon />} lines={["시간 표", "시 막대"]} />
      </GroupBody>
      <GroupLabel>필터</GroupLabel>
    </Group>
    <Group $w={111}>
      <GroupBody><Big w={111} icon={<LinkIcon />} lines={["링", "크"]} /></GroupBody>
      <GroupLabel>링크</GroupLabel>
    </Group>
    <Group $w={96}>
      <GroupBody><Big w={96} icon={<Tile><GlyphIcon text="가" /></Tile>} lines={["텍스트", ""]} arrow /></GroupBody>
    </Group>
    <Group $w={96}>
      <GroupBody><Big w={96} icon={<Tile><GlyphIcon text="Ω" serif /></Tile>} lines={["기호", ""]} arrow /></GroupBody>
    </Group>
    <Collapse aria-label="리본 메뉴 축소"><Svg w={18} h={12}><path d="M1 11l8-8 8 8" stroke="#777" strokeWidth="3.500" /></Svg></Collapse>
  </Ribbon>
);

const Dots = () => <Svg w={5} h={20}><path d="M0 0h4v4H0zM0 8h4v4H0zM0 16h4v4H0z" fill="#b5b5b5" /></Svg>;

const FormulaRow = () => (
  <FormulaBar>
    <NameBox>
      <NameInput aria-label="이름 상자" defaultValue="A1" />
      <Tri dir="down" s={16} />
    </NameBox>
    <Grip $w={60}><Dots /></Grip>
    <FormulaTools>
      <button aria-label="취소"><Svg w={24} h={22}><path d="M2 1l20 20M22 1C14 7 8 13 2 21" stroke="#c4c4c4" strokeWidth="3" /></Svg></button>
      <button aria-label="입력"><Svg w={26} h={22}><path d="M2 12l7 8L24 1" stroke="#c4c4c4" strokeWidth="4" /></Svg></button>
      <button aria-label="함수 삽입">
        <Svg w={34} h={34}><text x="5" y="25" fontFamily='"Liberation Serif", serif' fontStyle="italic" fontSize="32" fill="#666">fx</text></Svg>
      </button>
    </FormulaTools>
    <FormulaBox>
      <FormulaInput aria-label="수식 입력줄" defaultValue="지역" />
      <button aria-label="수식 입력줄 확장"><Svg w={18} h={12}><path d="M1 2l8 7 8-7" stroke="#777" strokeWidth="3.500" /></Svg></button>
    </FormulaBox>
  </FormulaBar>
);

const SheetTabsBar = () => (
  <SheetBar>
    <SheetNav aria-label="이전 시트"><Tri dir="left" color="#c0c0c0" s={15} /></SheetNav>
    <SheetNav aria-label="다음 시트"><Tri dir="right" color="#c0c0c0" s={15} /></SheetNav>
    <SheetTabs>
      <SheetTab $w={112}>Sheet1</SheetTab>
      <SheetTab $w={155}>Sheet1 (2)</SheetTab>
      <SheetTab $w={156} $on>Sheet1 (3)</SheetTab>
    </SheetTabs>
    <AddSheet aria-label="새 시트">
      <Svg w={32} h={32}><circle cx="16" cy="16" r="15" stroke="#777" strokeWidth="1.800" /><path d="M16 8v16M8 16h16" stroke="#777" strokeWidth="3.500" /></Svg>
    </AddSheet>
    <HScroll>
      <Grip $w={45}><Dots /></Grip>
      <ScrollButton aria-label="왼쪽으로"><Tri dir="left" s={14} /></ScrollButton>
      <HTrack><HThumb /></HTrack>
      <ScrollButton aria-label="오른쪽으로"><Tri dir="right" s={14} /></ScrollButton>
    </HScroll>
  </SheetBar>
);

const Status = () => (
  <StatusBar>
    <Ready>준비</Ready>
    <Stats>
      <Stat>평균: <Latin $size={22}>1844.1696</Latin></Stat>
      <Stat $gap={55}>개수: <Latin $size={22}>104</Latin></Stat>
      <Stat $gap={30}>합계: <Latin $size={22}>138312.72</Latin></Stat>
    </Stats>
    <ViewButton $on aria-label="기본"><Svg w={32} h={32}><path d="M1 1h30v30H1zM11 1v30M21 1v30M1 11h30M1 21h30" stroke="#777" strokeWidth="1.500" /></Svg></ViewButton>
    <ViewButton aria-label="페이지 레이아웃"><Svg w={34} h={31}><path d="M1 1h32v29H1zM8 5h18v21H8zM12 9h10M12 13h10M12 17h10M12 21h10" stroke="#666" strokeWidth="1.500" /></Svg></ViewButton>
    <ViewButton aria-label="페이지 나누기 미리 보기"><Svg w={34} h={32}><path d="M1 1h32v30H1zM1 20h20V1M11 1v19" stroke="#666" strokeWidth="1.500" /></Svg></ViewButton>
    <ZoomStep aria-label="축소"><Svg w={12} h={4}><path d="M0 0h12v4H0z" fill="#666" /></Svg></ZoomStep>
    <ZoomRange type="range" min="0" max="100" defaultValue="50" aria-label="확대/축소" />
    <ZoomStep aria-label="확대"><Svg w={16} h={16}><path d="M8 0v16M0 8h16" stroke="#666" strokeWidth="2.500" /></Svg></ZoomStep>
    <ZoomValue>100%</ZoomValue>
  </StatusBar>
);

const TaskbarRow = () => (
  <Taskbar>
    <Task $w={96} aria-label="시작"><Svg w={32} h={32}><path d="M0 5l13-2v12H0zM15 3l17-3v15H15zM0 17h13v12L0 27zM15 17h17v15l-17-3z" fill="#fff" /></Svg></Task>
    <Task aria-label="검색"><Svg w={34} h={34}><circle cx="21" cy="12" r="11" stroke="#fff" strokeWidth="2.200" /><path d="M13 20L1 33" stroke="#fff" strokeWidth="2.200" /></Svg></Task>
    <Task $w={96} aria-label="작업 보기"><Svg w={34} h={32}><path d="M1 0v5h22V0M1 32v-5h22v5M1 10h22v12H1zM30 0v6M30 16v16" stroke="#fff" strokeWidth="2" /><path d="M27 9h6v5h-6z" fill="#fff" /></Svg></Task>
    <Task $w={102} aria-label="사진">
      <Svg w={44} h={44}>
        <circle cx="22" cy="22" r="21" fill="#f4c67c" /><circle cx="31" cy="21" r="6" fill="#ec8f2e" />
        <path d="M1 24C12 12 20 14 28 23L39 34A21 21 0 0 1 1 24z" fill="#8091bd" stroke="#e8e0cc" strokeWidth="1" />
      </Svg>
    </Task>
    <Task aria-label="스티커 메모"><Svg w={40} h={42}><path d="M0 0h40v42H0z" fill="#ffd500" /><path d="M20 42V21h20z" fill="#444" /><path d="M20 42l20-21v21z" fill="#f2ac00" /></Svg></Task>
    <Task aria-label="캡처 도구">
      <Svg w={44} h={46}>
        <ellipse cx="17" cy="26" rx="16" ry="8" fill="#9a9fa3" stroke="#b33" transform="rotate(-8 17 26)" />
        <ellipse cx="20" cy="13" rx="19" ry="11" fill="#f7f7f7" stroke="#e0302e" strokeWidth="1.600" transform="rotate(-20 20 13)" />
        <path d="M12 12l16-5M16 16l14-4" stroke="#b5b8bb" strokeWidth="1.200" />
        <path d="M7 15l20 13M19 6l6 20" stroke="#8d9094" strokeWidth="2.500" />
        <ellipse cx="35" cy="29" rx="8" ry="5" stroke="#1787d0" strokeWidth="3.200" transform="rotate(35 35 29)" />
        <ellipse cx="26" cy="36" rx="5" ry="8" stroke="#1787d0" strokeWidth="3.200" />
      </Svg>
    </Task>
    <Task aria-label="파일 탐색기">
      <Svg w={40} h={36}><path d="M0 0h16l3 4v6H0z" fill="#dd9a0b" /><path d="M0 6h18l2-3h19q1 0 1 1v30H0z" fill="#ffd462" /><path d="M7 19q0-2 2-2h23q2 0 2 2v17h-7V26H14v10H7z" fill="#3c96dc" /></Svg>
    </Task>
    <Task $run aria-label="한글">
      <Svg w={36} h={46}>
        <path d="M1 45V14Q1 1 14 1H35V32Q35 45 22 45z" fill="#06a2de" />
        <path d="M18 11v4M10 16h16M11 31v4h15M18 28v3" stroke="#fff" strokeWidth="3" /><circle cx="18" cy="23" r="4" stroke="#fff" strokeWidth="2.500" />
      </Svg>
    </Task>
    <Task aria-label="Internet Explorer">
      <Svg w={46} h={44}>
        <path fillRule="evenodd" d="M43 27H16C17 36 29 36 31 30H42C37 46 6 46 6 23C6 0 42-1 43 24zM32 20C31 11 17 11 16 20z" fill="#6fdcf8" />
        <path d="M10 41C-6 46 2 22 20 9C36-3 48 0 41 11" stroke="#f5bd30" strokeWidth="3" />
      </Svg>
    </Task>
    <Task aria-label="Microsoft Edge">
      <Svg w={48} h={48}>
        <circle cx="24" cy="24" r="23" fill="#1479d0" />
        <path d="M1 22C4-3 43-6 47 22C48 33 32 33 29 28C34 12 14 10 1 22z" fill="#3bc8c0" />
        <path d="M30 3C41 6 47 14 47 23C46 33 33 32 29 28C33 20 30 12 24 10z" fill="#5bd67a" />
        <path d="M18 18C8 30 18 47 34 44C44 40 46 34 44 33C30 39 18 32 18 18z" fill="#0c4fa0" />
        <path d="M29 28c3 6 14 8 19 3v5c-8 4-22 3-24-6z" fill="#202d35" />
      </Svg>
    </Task>
    <Task $run aria-label="Chrome">
      <Svg w={52} h={52}>
        <circle cx="24" cy="24" r="23" fill="#fbc715" />
        <path d="M4 12A23 23 0 0 1 45 14H24L14 30z" fill="#e33b2e" /><path d="M4 12l13 18 10 4-7 13A23 23 0 0 1 4 12z" fill="#2da14c" />
        <circle cx="24" cy="24" r="11" fill="#fff" /><circle cx="24" cy="24" r="8.500" fill="#3b79e1" />
        <circle cx="37" cy="37" r="14" fill="#a58a70" /><circle cx="37" cy="37" r="10" fill="#eab92c" />
        <path d="M33 33v3M40 33v3M32 39q5 5 10 0" stroke="#8a5a10" strokeWidth="2" />
      </Svg>
    </Task>
    <Task $on $w={96} aria-label="Excel">
      <Svg w={42} h={42}>
        <path d="M22 6h18v30H22z" fill="#fff" /><path d="M24 11h6M32 11h6M24 17h6M32 17h6M24 23h6M32 23h6M24 29h6M32 29h6" stroke="#217346" strokeWidth="4" />
        <path d="M0 5l25-5v42L0 37z" fill="#1f7244" /><path d="M7 14l10 14M17 14L7 28" stroke="#fff" strokeWidth="3" />
      </Svg>
    </Task>
    <Tray>
      <TrayButton aria-label="숨겨진 아이콘 표시"><Svg w={26} h={14}><path d="M1 13L13 1l12 12" stroke="#fff" strokeWidth="2" /></Svg></TrayButton>
      <TrayButton aria-label="모임 시작"><Svg w={26} h={32}><path d="M5 4q7-5 14 0M5 28q7 5 14 0" stroke="#fff" strokeWidth="2" /><rect x="2" y="8" width="16" height="15" rx="4" stroke="#fff" strokeWidth="2.200" /><path d="M18 14l6-4v11l-6-4" stroke="#fff" strokeWidth="2" /></Svg></TrayButton>
      <TrayButton aria-label="배터리"><Svg w={34} h={26}><path d="M10 6h19v16H9v-5M31 10v8M1 4v6q3 4 7 0V4H1M3 0v4M7 0v4M5 12v6q0 3 4 4" stroke="#fff" strokeWidth="2" /><path d="M12 9h14v10H12z" fill="#fff" /></Svg></TrayButton>
      <TrayButton aria-label="볼륨"><Svg w={34} h={28}><path d="M1 9h5l8-7v24l-8-7H1zM18 9q4 5 0 10M23 5q6 9 0 18" stroke="#fff" strokeWidth="2" /><path d="M27 1q8 13 0 26" stroke="#7b858a" strokeWidth="2" /></Svg></TrayButton>
      <TrayButton $w={76} aria-label="Windows Ink"><Svg w={34} h={34}><path d="M8 25L24 3q4-3 5 2L14 26l-7 3zM8 18C-4 24 2 34 12 30M24 16c10-2 10 5 3 5" stroke="#fff" strokeWidth="2" /></Svg></TrayButton>
      <TrayButton $w={56} aria-label="알림 끔"><Svg w={30} h={30}><circle cx="15" cy="15" r="15" fill="#8d9498" /><path d="M9 9l12 12M21 9L9 21" stroke="#22292e" strokeWidth="3.500" /></Svg></TrayButton>
      <TrayButton $w={60} aria-label="한/영"><ImeBadge>한</ImeBadge></TrayButton>
      <Clock>오후 <Latin $size={23}>6:49</Latin><br />2023-02-07</Clock>
      <Notice aria-label="알림 센터"><Svg w={32} h={32}><path d="M1 1h30v24H21l-5 5-5-5H1z" stroke="#fff" strokeWidth="2" /></Svg></Notice>
    </Tray>
  </Taskbar>
);

export default function App() {
  return (
    <Window>
      <Global />
      <Header />
      <InsertRibbon />
      <FormulaRow />
      <Workspace>
        <Sheet />
        <VScroll>
          <ScrollButton aria-label="위로"><Tri dir="up" /></ScrollButton>
          <VTrack><VThumb /></VTrack>
          <ScrollButton aria-label="아래로"><Tri dir="down" s={15} /></ScrollButton>
        </VScroll>
      </Workspace>
      <SheetTabsBar />
      <Status />
      <TaskbarRow />
    </Window>
  );
}
